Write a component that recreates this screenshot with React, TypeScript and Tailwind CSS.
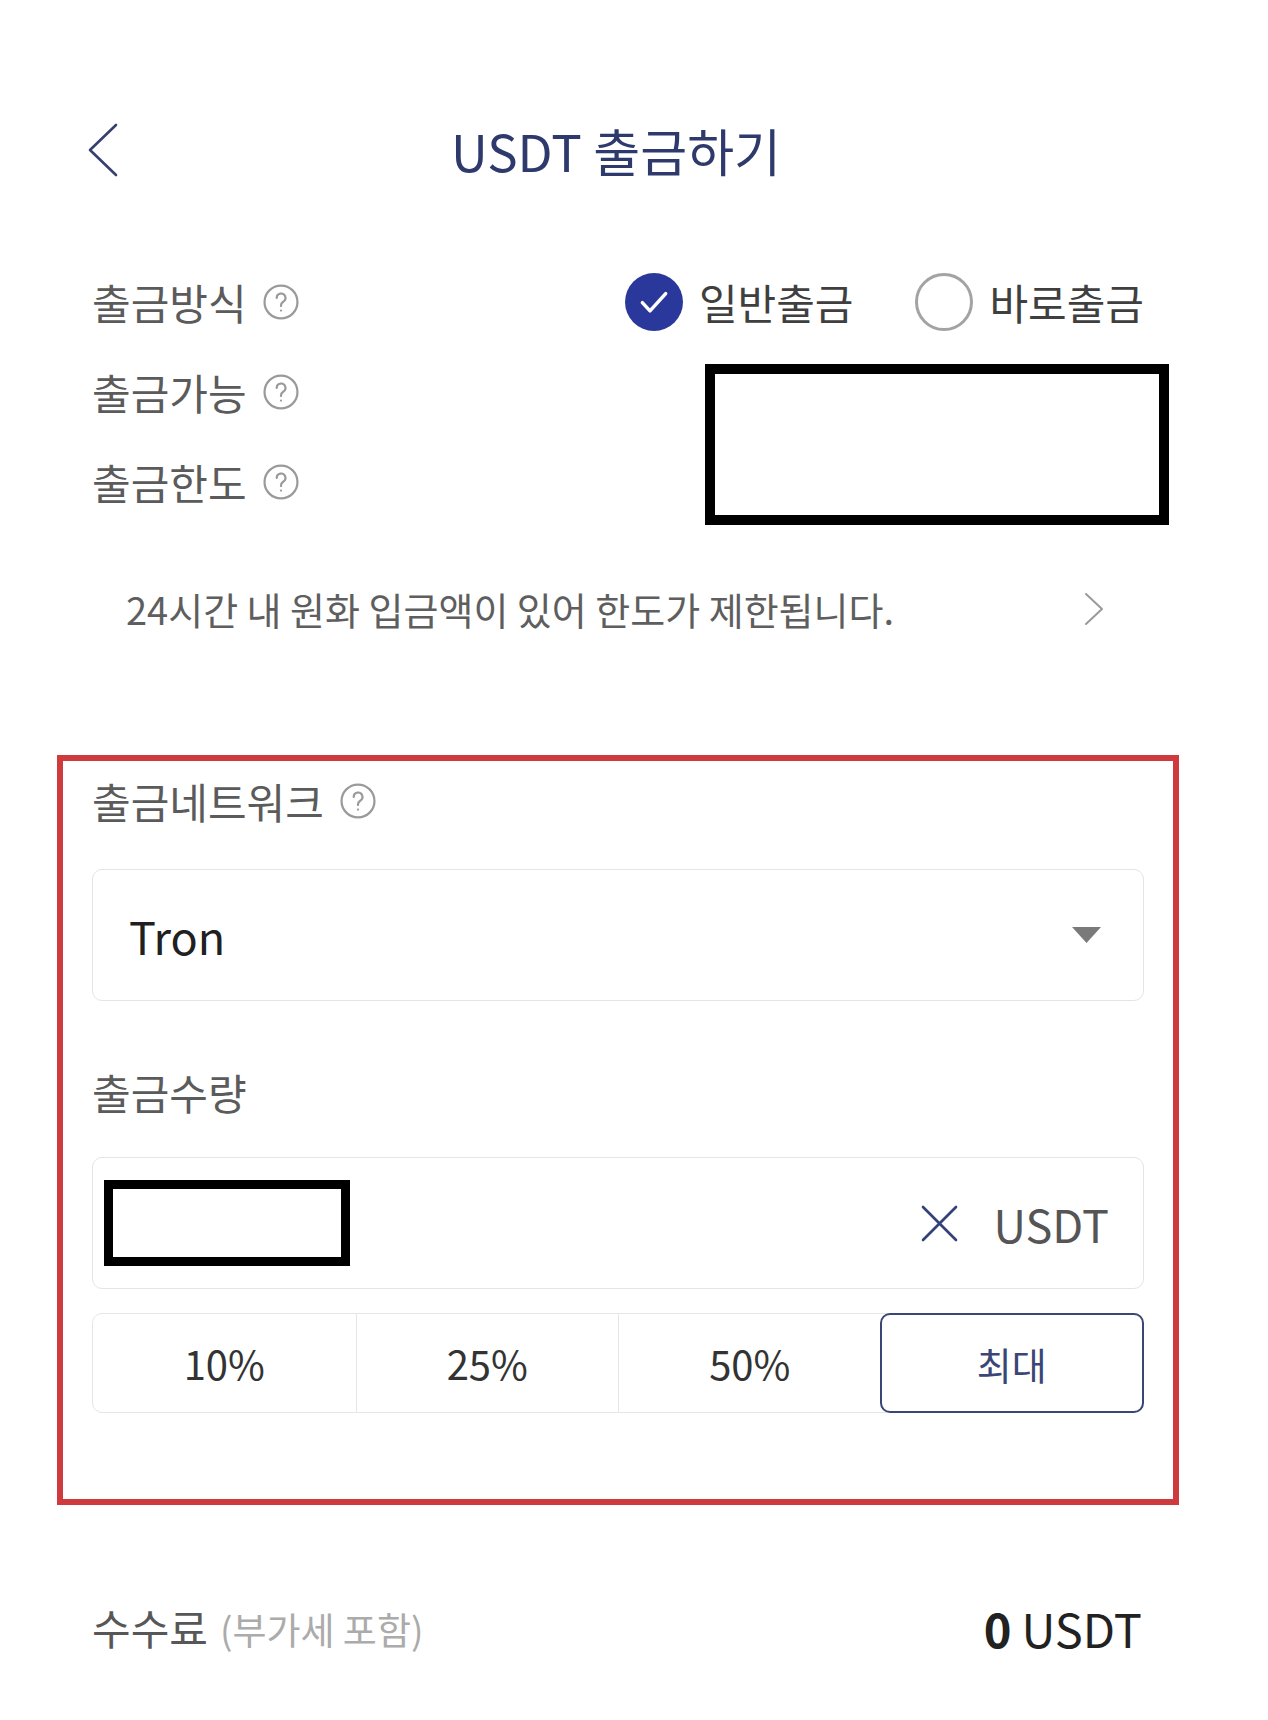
import React, { useState } from 'react';

const FONT = "font-['Noto_Sans_CJK_KR','Noto_Sans',sans-serif]";

// Small circled question mark used next to field labels
const HelpIcon = () => (
  <svg viewBox="0 0 24 24" className="w-[38px] h-[38px] shrink-0" fill="none" stroke="#9a9a9a" strokeWidth="1.4" strokeLinecap="round">
    <circle cx="12" cy="12" r="10.4" />
    <path d="M9.3 9.4a2.75 2.75 0 1 1 4.1 2.4c-0.9 0.55-1.4 1.1-1.4 2.3v0.5" />
    <circle cx="12" cy="17.4" r="0.7" fill="#9a9a9a" stroke="none" />
  </svg>
);

const FieldLabel = ({ text, help = true }: { text: string; help?: boolean }) => (
  <div className="flex items-center gap-[15px] h-[40px]">
    <span className="text-[42px] leading-none text-[#5b5b5b]">{text}</span>
    {help && <HelpIcon />}
  </div>
);

const Radio = ({ checked, label, onClick }: { checked: boolean; label: string; onClick: () => void }) => (
  <button onClick={onClick} className="flex items-center gap-[16px]">
    {checked ? (
      <span className="w-[58px] h-[58px] rounded-full bg-[#29389a] flex items-center justify-center">
        <svg viewBox="0 0 24 24" className="w-[40px] h-[40px]" fill="none" stroke="white" strokeWidth="2.1" strokeLinecap="round" strokeLinejoin="round">
          <path d="M5 12.4l4.6 4.9L19 7" />
        </svg>
      </span>
    ) : (
      <span className="w-[58px] h-[58px] rounded-full border-[3px] border-[#a3a3a3]" />
    )}
    <span className="text-[42px] leading-none text-[#3f3f3f]">{label}</span>
  </button>
);

const PERCENTS = ['10%', '25%', '50%', '최대'];

const App: React.FC = () => {
  const [mode, setMode] = useState<'normal' | 'instant'>('normal');
  const [pct, setPct] = useState('최대');

  return (
    <div className={`${FONT} bg-white min-h-[1720px] w-full pt-[100px]`}>
      {/* Header */}
      <div className="h-[100px] px-[88px] flex items-center">
        <svg viewBox="0 0 30 54" className="w-[30px] h-[54px] shrink-0" fill="none" stroke="#35406e" strokeWidth="2.6" strokeLinecap="round" strokeLinejoin="round">
          <polyline points="28,2 2,27 28,52" />
        </svg>
        <h1 className="flex-1 text-center pr-[66px] text-[51px] leading-none text-[#2e3a6c]">USDT 출금하기</h1>
      </div>

      {/* Withdrawal info */}
      <div className="pl-[92px] pr-[124px] mt-[57px]">
        <div className="h-[90px] flex items-center justify-between">
          <FieldLabel text="출금방식" />
          <div className="flex items-center gap-[62px]">
            <Radio checked={mode === 'normal'} label="일반출금" onClick={() => setMode('normal')} />
            <Radio checked={mode === 'instant'} label="바로출금" onClick={() => setMode('instant')} />
          </div>
        </div>
        <div className="flex justify-between">
          <div className="flex flex-col">
            <div className="h-[90px] flex items-center"><FieldLabel text="출금가능" /></div>
            <div className="h-[90px] flex items-center"><FieldLabel text="출금한도" /></div>
          </div>
          <div className="mt-[17px] -mr-[25px] w-[464px] h-[161px] border-[10px] border-black bg-white" />
        </div>

        {/* Notice */}
        <div className="mt-[42px] h-[80px] pl-[34px] pr-[40px] flex items-center justify-between">
          <span className="text-[38px] leading-none text-[#5e5e5e]">24시간 내 원화 입금액이 있어 한도가 제한됩니다.</span>
          <svg viewBox="0 0 20 34" className="w-[20px] h-[34px]" fill="none" stroke="#9a9a9a" strokeWidth="2" strokeLinecap="round" strokeLinejoin="round">
            <polyline points="2,2 18,17 2,32" />
          </svg>
        </div>
      </div>

      {/* Network / amount section */}
      <div className="ml-[57px] mr-[89px] mt-[106px] border-[6px] border-[#cf3b3c] px-[29px] pt-[20px] pb-[86px]">
        <FieldLabel text="출금네트워크" />

        <div className="mt-[48px] h-[132px] rounded-[10px] border border-[#e4e4e4] pl-[36px] pr-[42px] flex items-center justify-between">
          <span className="text-[45px] leading-none text-[#202020]">Tron</span>
          <svg viewBox="0 0 29 16" className="w-[29px] h-[16px]">
            <polygon points="0,0 29,0 14.5,16" fill="#7a7a7a" />
          </svg>
        </div>

        <div className="mt-[71px]">
          <FieldLabel text="출금수량" help={false} />
        </div>

        <div className="mt-[45px] h-[132px] rounded-[10px] border border-[#e4e4e4] pl-[11px] pr-[34px] flex items-center justify-between">
          <div className="w-[246px] h-[86px] border-[9px] border-black bg-white" />
          <div className="flex items-center gap-[36px]">
            <svg viewBox="0 0 37 37" className="w-[37px] h-[37px]" fill="none" stroke="#34407a" strokeWidth="2.6" strokeLinecap="round">
              <line x1="2" y1="2" x2="35" y2="35" />
              <line x1="35" y1="2" x2="2" y2="35" />
            </svg>
            <span className="text-[45px] leading-none text-[#555555]">USDT</span>
          </div>
        </div>

        <div className="mt-[24px] h-[100px] rounded-[10px] border border-[#e6e6e6] grid grid-cols-4">
          {PERCENTS.map((p, i) => (
            <button
              key={p}
              onClick={() => setPct(p)}
              className={
                pct === p
                  ? 'relative -m-px rounded-[10px] border-2 border-[#3a4676] flex items-center justify-center text-[38px] text-[#3a4676]'
                  : i > 0 && pct !== PERCENTS[i - 1]
                  ? 'border-l border-[#e6e6e6] flex items-center justify-center text-[40px] text-[#333333]'
                  : 'flex items-center justify-center text-[40px] text-[#333333]'
              }
            >
              {p}
            </button>
          ))}
        </div>
      </div>

      {/* Fee */}
      <div className="mt-[92px] h-[60px] pl-[92px] pr-[126px] flex items-center justify-between">
        <div className="flex items-baseline gap-[12px]">
          <span className="text-[42px] leading-none text-[#575757]">수수료</span>
          <span className="text-[37px] leading-none text-[#ababab]">(부가세 포함)</span>
        </div>
        <div className="flex items-baseline gap-[10px] text-[47px] leading-none text-[#222222]">
          <span className="font-bold">0</span>
          <span>USDT</span>
        </div>
      </div>
    </div>
  );
};

export default App;
